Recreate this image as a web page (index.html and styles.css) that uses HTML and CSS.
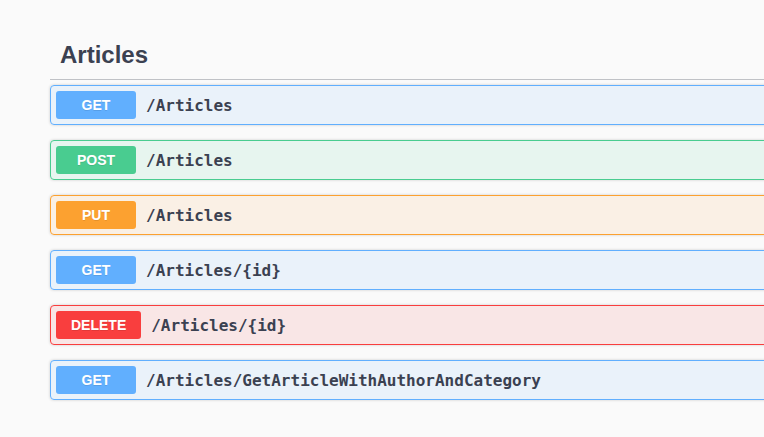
FILE: index.html
```html
<!DOCTYPE html>
<html lang="en">
<head>
  <meta charset="UTF-8">
  <title>Articles</title>
  <link rel="stylesheet" href="styles.css">
</head>
<body>
  <div class="wrapper">
    <h3 class="opblock-tag">Articles</h3>

    <div class="opblock opblock-get">
      <div class="summary">
        <span class="method">GET</span>
        <span class="path">/Articles</span>
      </div>
    </div>

    <div class="opblock opblock-post">
      <div class="summary">
        <span class="method">POST</span>
        <span class="path">/Articles</span>
      </div>
    </div>

    <div class="opblock opblock-put">
      <div class="summary">
        <span class="method">PUT</span>
        <span class="path">/Articles</span>
      </div>
    </div>

    <div class="opblock opblock-get">
      <div class="summary">
        <span class="method">GET</span>
        <span class="path">/Articles/{id}</span>
      </div>
    </div>

    <div class="opblock opblock-delete">
      <div class="summary">
        <span class="method">DELETE</span>
        <span class="path">/Articles/{id}</span>
      </div>
    </div>

    <div class="opblock opblock-get">
      <div class="summary">
        <span class="method">GET</span>
        <span class="path">/Articles/GetArticleWithAuthorAndCategory</span>
      </div>
    </div>
  </div>
</body>
</html>
```

FILE: styles.css
```css
html, body {
  overflow: hidden;
}
body {
  margin: 0;
  background: #fafafa;
  font-family: 'Liberation Sans', Arial, sans-serif;
  color: #3b4151;
}
.wrapper {
  width: 1000px;
  padding: 31px 0 0 50px;
}
.opblock-tag {
  margin: 0 0 5px;
  padding: 10px 20px 10px 10px;
  font-size: 24px;
  font-weight: 700;
  line-height: 28px;
  color: #3b4151;
  border-bottom: 1px solid rgba(59, 65, 81, 0.3);
}
.opblock {
  margin-bottom: 15px;
  border: 1px solid #000;
  border-radius: 4px;
  box-shadow: 0 0 3px rgba(0, 0, 0, 0.19);
}
.summary {
  display: flex;
  align-items: center;
  padding: 5px;
}
.method {
  min-width: 80px;
  padding: 6px 15px;
  box-sizing: border-box;
  border-radius: 3px;
  text-align: center;
  font-size: 14px;
  font-weight: 700;
  line-height: 16px;
  color: #fff;
  text-shadow: 0 1px 0 rgba(0, 0, 0, 0.1);
}
.path {
  padding: 0 10px;
  font-family: 'DejaVu Sans Mono', monospace;
  font-size: 16px;
  font-weight: 700;
  color: #3b4151;
}
.opblock-get {
  border-color: #61affe;
  background: rgba(97, 175, 254, 0.1);
}
.opblock-get .method {
  background: #61affe;
}
.opblock-post {
  border-color: #49cc90;
  background: rgba(73, 204, 144, 0.1);
}
.opblock-post .method {
  background: #49cc90;
}
.opblock-put {
  border-color: #fca130;
  background: rgba(252, 161, 48, 0.1);
}
.opblock-put .method {
  background: #fca130;
}
.opblock-delete {
  border-color: #f93e3e;
  background: rgba(249, 62, 62, 0.1);
}
.opblock-delete .method {
  background: #f93e3e;
}
```
